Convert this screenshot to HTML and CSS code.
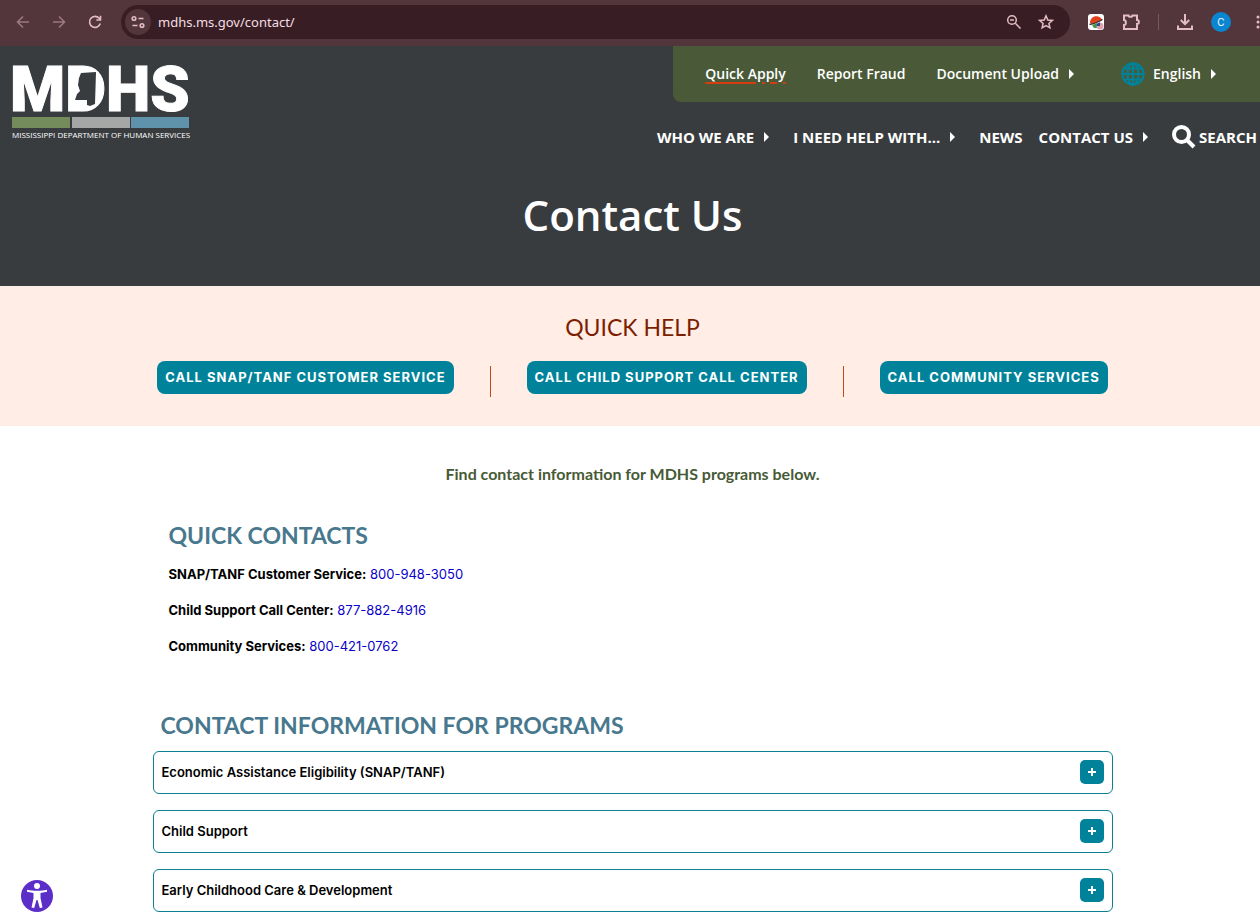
FILE: index.html
```
<!DOCTYPE html>
<html lang="en">
<head>
    <meta charset="UTF-8">
    <meta name="viewport" content="width=device-width, initial-scale=1">
    <title>Contact Us - MDHS</title>
    <link rel="stylesheet" href="styles.css">
</head>
<body>
    <div class="browser">
        <div class="browser-nav">
            <button class="tool dim" aria-label="Back">
                <svg width="16" height="16" viewBox="0 0 16 16"><path d="M14 8H3M8 2.500L2.500 8L8 13.500"/></svg>
            </button>
            <button class="tool dim" aria-label="Forward">
                <svg width="16" height="16" viewBox="0 0 16 16"><path d="M2 8H13M8 2.500L13.500 8L8 13.500"/></svg>
            </button>
            <button class="tool" aria-label="Reload">
                <svg width="16" height="16" viewBox="0 0 16 16"><path d="M13.300 9.500A5.500 5.500 0 1 1 12.200 4.300L13.500 5.700M13.500 1.800V6H9.300"/></svg>
            </button>
        </div>
        <div class="address">
            <button class="site-info" aria-label="Site information">
                <svg width="14" height="14" viewBox="0 0 14 14"><circle cx="3" cy="3.500" r="1.800"/><path d="M7.500 3.500H12.500M1.500 10.500H6.500"/><circle cx="11" cy="10.500" r="1.800"/></svg>
            </button>
            <input class="url" type="text" aria-label="Address" value="mdhs.ms.gov/contact/">
            <button class="tool" aria-label="Zoom">
                <svg width="16" height="16" viewBox="0 0 16 16"><circle cx="6" cy="6" r="4.300"/><path d="M9.300 9.300L14.500 14.500M4 6H8"/></svg>
            </button>
            <button class="tool" aria-label="Bookmark this page">
                <svg width="16" height="16" viewBox="0 0 16 16"><path d="M8 1.800L9.800 6L14.300 6.400L10.900 9.400L11.900 13.800L8 11.500L4.100 13.800L5.100 9.400L1.700 6.400L6.200 6Z"/></svg>
            </button>
        </div>
        <div class="browser-tools">
            <button class="tool" aria-label="Extension">
                <svg class="solid" width="16" height="16" viewBox="0 0 16 16"><rect width="16" height="16" rx="3" fill="#fff"/><path d="M2 9C2 4 6 1.500 10 2.500C13 3.300 14 5 14 6.500L4 10.500Z" fill="#e2431e"/><path d="M1.500 10.500C6 10 10 8 14.500 5.500" fill="none" stroke="#333" stroke-width="1.300"/><path d="M4 11L9 9V14H6Z" fill="#3f9a4d"/><circle cx="12" cy="12" r="3.500" fill="#dfa3b0"/><path d="M8.500 12A3.500 3.500 0 0 1 12 8.500V12Z" fill="#35478c"/></svg>
            </button>
            <button class="tool" aria-label="Extensions">
                <svg width="20" height="18" viewBox="0 0 20 18"><path d="M3 2.500H7.500C7.500 4.200 11.500 4.200 11.500 2.500H16V7C18.500 7 18.500 11 16 11V16H3V12C5.500 12 5.500 7 3 7Z"/></svg>
            </button>
            <span class="divider"></span>
            <button class="tool" aria-label="Downloads">
                <svg width="18" height="18" viewBox="0 0 18 18"><path d="M9 1V11M4.800 7L9 11.200L13.200 7M2 12.500V16H16V12.500"/></svg>
            </button>
            <button class="profile" aria-label="Profile">C</button>
            <button class="tool more" aria-label="Menu">
                <svg class="solid" width="6" height="16" viewBox="0 0 6 16"><circle cx="3" cy="3" r="1.500"/><circle cx="3" cy="8" r="1.500"/><circle cx="3" cy="13" r="1.500"/></svg>
            </button>
        </div>
    </div>

    <header class="header">
        <div class="header-top">
            <a class="logo" href="#" aria-label="Mississippi Department of Human Services">
                <svg width="188" height="98" viewBox="0 -14 188 98">
                    <text class="logo-name" x="-1" y="47">MDHS</text>
                    <path d="M65 7H76C92 7 92 42 76 42H65Z" fill="#fff"/>
                    <path class="logo-state" d="M70 9L85 8L84 40L79 42L76 41L76 36L64 36L66 30L69 27L67 21L68 14Z"/>
                    <rect x="1" y="53" width="58" height="11" fill="#748c5b"/>
                    <rect x="61" y="53" width="58" height="11" fill="#a5a6a6"/>
                    <rect x="120" y="53" width="58" height="11" fill="#5e93ab"/>
                    <text class="logo-line" x="1" y="74">MISSISSIPPI DEPARTMENT OF HUMAN SERVICES</text>
                </svg>
            </a>
            <div class="menus">
                <nav class="utility">
                    <a class="active" href="#">Quick Apply</a>
                    <a href="#">Report Fraud</a>
                    <a class="drop" href="#">Document Upload</a>
                    <a class="drop language" href="#">
                        <svg width="24" height="24" viewBox="0 0 24 24"><circle cx="12" cy="12" r="10.700"/><ellipse cx="12" cy="12" rx="5.500" ry="10.700"/><path d="M12 1V23M1 12H23M3 6.500H21M3 17.500H21"/></svg>
                        English
                    </a>
                </nav>
                <nav class="main-nav">
                    <a class="drop" href="#">WHO WE ARE</a>
                    <a class="drop" href="#">I NEED HELP WITH...</a>
                    <a href="#">NEWS</a>
                    <a class="drop" href="#">CONTACT US</a>
                    <a class="search" href="#">
                        <svg width="24" height="24" viewBox="0 0 24 24"><circle cx="9.500" cy="9.500" r="7.500"/><path d="M15 15L22 22"/></svg>
                        SEARCH
                    </a>
                </nav>
            </div>
        </div>
        <h1>Contact Us</h1>
    </header>

    <section class="quick-help">
        <h2>QUICK HELP</h2>
        <div class="calls">
            <a class="call" href="tel:800-948-3050">CALL SNAP/TANF CUSTOMER SERVICE</a>
            <span class="rule"></span>
            <a class="call" href="tel:877-882-4916">CALL CHILD SUPPORT CALL CENTER</a>
            <span class="rule"></span>
            <a class="call" href="tel:800-421-0762">CALL COMMUNITY SERVICES</a>
        </div>
    </section>

    <main class="content">
        <p class="intro">Find contact information for MDHS programs below.</p>

        <section class="contacts">
            <h2>QUICK CONTACTS</h2>
            <p><strong>SNAP/TANF Customer Service:</strong> <a href="tel:800-948-3050">800-948-3050</a></p>
            <p><strong>Child Support Call Center:</strong> <a href="tel:877-882-4916">877-882-4916</a></p>
            <p><strong>Community Services:</strong> <a href="tel:800-421-0762">800-421-0762</a></p>
        </section>

        <section class="programs">
            <h2>CONTACT INFORMATION FOR PROGRAMS</h2>
            <button class="program" aria-expanded="false">
                Economic Assistance Eligibility (SNAP/TANF)
                <span class="plus"></span>
            </button>
            <button class="program" aria-expanded="false">
                Child Support
                <span class="plus"></span>
            </button>
            <button class="program" aria-expanded="false">
                Early Childhood Care &amp; Development
                <span class="plus"></span>
            </button>
        </section>
    </main>

    <button class="accessibility" aria-label="Accessibility menu">
        <svg width="32" height="32" viewBox="0 0 32 32"><circle cx="16" cy="16" r="16" fill="#5c2ec8"/><circle cx="16" cy="6" r="3" fill="#fff"/><path d="M6 9.800C12 11.200 20 11.200 26 9.800V11.800L19.500 13V18L21.500 27.500L18.800 28L16.500 20H15.500L13.200 28L10.500 27.500L12.500 18V13L6 11.800Z" fill="#fff"/></svg>
    </button>
</body>
</html>
```
FILE: styles.css
```
* {
    box-sizing: border-box;
}

body {
    margin: 0;
    background: #fff;
    color: #000;
    font-family: "Inter", "Open Sans", sans-serif;
    font-size: 13px;
    line-height: 20px;
}

h1, h2, p {
    margin: 0;
}

a {
    text-decoration: none;
}

button {
    padding: 0;
    border: 0;
    background: none;
    font: inherit;
    cursor: pointer;
}

svg {
    display: block;
}

/* Browser toolbar */
.browser {
    display: flex;
    align-items: center;
    height: 46px;
    padding: 0 0 2px 15px;
    background: #53353c;
    overflow: hidden;
}

.browser-nav {
    display: flex;
    gap: 20px;
    margin-right: 18px;
}

.tool svg,
.site-info svg {
    fill: none;
    stroke: #e3bcc5;
    stroke-width: 2;
}

.browser-nav .tool svg,
.site-info svg {
    stroke-width: 1.6;
}

.tool .solid {
    fill: #e3bcc5;
    stroke: none;
}

.dim {
    opacity: 0.5;
}

.address {
    display: flex;
    flex: 1;
    align-items: center;
    gap: 16px;
    height: 34px;
    padding: 0 16px 0 4px;
    border-radius: 17px;
    background: #381e24;
}

.address .tool svg {
    stroke-width: 1.5;
}

.site-info {
    display: grid;
    place-items: center;
    width: 26px;
    height: 26px;
    border-radius: 50%;
    background: #53353c;
}

.url {
    flex: 1;
    min-width: 0;
    margin-left: -9px;
    padding: 0;
    border: 0;
    outline: none;
    background: none;
    color: #f3dfe3;
    font-family: "Noto Sans", sans-serif;
    font-size: 13px;
}

.browser-tools {
    display: flex;
    align-items: center;
    gap: 17px;
    margin-left: 18px;
}

.browser-tools svg {
    flex: none;
}

.divider {
    width: 1px;
    height: 16px;
    background: #7b565f;
}

.profile {
    width: 20px;
    height: 20px;
    border-radius: 50%;
    background: #0a86d1;
    color: #fff;
    font-size: 10px;
}

.more {
    margin: 0 -1px 0 7px;
}

/* Site header */
.header {
    height: 240px;
    background: #393c3f;
    color: #fff;
    font-family: "Open Sans", sans-serif;
}

.header-top {
    display: flex;
    justify-content: space-between;
    align-items: flex-start;
}

.logo {
    padding: 4px 0 0 11px;
}

.logo-name {
    fill: #fff;
    stroke: #fff;
    stroke-width: 1;
    font-family: "Roboto", sans-serif;
    font-size: 63px;
    font-weight: 900;
}

.logo-state {
    fill: #393c3f;
}

.logo-line {
    fill: #fff;
    font-family: "Open Sans", sans-serif;
    font-size: 8px;
}

.menus {
    display: flex;
    flex-direction: column;
    align-items: flex-end;
}

.menus a {
    display: flex;
    align-items: center;
    color: #fff;
}

/* Small triangle after items that open a submenu */
.drop::after {
    content: "";
    margin-left: 10px;
    border-left: 5px solid #fff;
    border-top: 5px solid transparent;
    border-bottom: 5px solid transparent;
}

.utility {
    display: flex;
    align-items: center;
    gap: 31px;
    height: 56px;
    padding: 0 44px 1px 32px;
    border-bottom-left-radius: 8px;
    background: #4a5a38;
    font-size: 14px;
    font-weight: 600;
}

.utility .active {
    text-decoration: underline 2px #d43d0f;
    text-underline-offset: 3px;
}

.language {
    gap: 8px;
    margin-left: 16px;
}

.language::after {
    margin-left: 2px;
}

.language svg {
    fill: none;
    stroke: #00829a;
    stroke-width: 2;
}

.main-nav {
    display: flex;
    align-items: center;
    gap: 16px;
    margin-top: 23px;
    padding-right: 3px;
    font-size: 15px;
    font-weight: 700;
}

.main-nav .drop {
    margin-right: 8px;
}

.search {
    gap: 3px;
}

.search svg {
    fill: none;
    stroke: #fff;
    stroke-width: 4;
}

h1 {
    margin-top: 36px;
    padding-left: 5px;
    font-size: 42px;
    font-weight: 600;
    line-height: 60px;
    text-align: center;
}

/* Quick help */
.quick-help {
    height: 140px;
    padding: 25px 0 0 5px;
    background: #ffede6;
    text-align: center;
}

h2 {
    color: #48788d;
    font-family: "Lato", sans-serif;
    font-size: 23px;
    font-weight: 700;
    line-height: 32px;
}

.quick-help h2 {
    color: #7d1e00;
    font-weight: 400;
}

.calls {
    display: flex;
    justify-content: center;
    gap: 36px;
    margin-top: 18px;
}

.call {
    height: 33px;
    padding: 0 8px;
    border-radius: 8px;
    background: #00839a;
    color: #fff;
    font-weight: 700;
    letter-spacing: 1px;
    line-height: 32px;
}

.rule {
    width: 1px;
    height: 31px;
    margin-top: 5px;
    background: #c04a1c;
}

/* Page content */
.content {
    max-width: 965px;
    margin: 0 auto;
    padding: 36px 0 0 5px;
}

.intro {
    color: #475a36;
    font-family: "Lato", sans-serif;
    font-size: 16px;
    font-weight: 700;
    line-height: 24px;
    text-align: center;
}

.contacts {
    padding: 33px 16px 0;
}

.contacts h2 {
    margin-bottom: 13px;
}

.contacts p {
    margin-bottom: 16px;
}

.contacts a {
    color: #0a00c8;
}

.programs {
    display: flex;
    flex-direction: column;
    gap: 16px;
    margin-top: 53px;
}

.programs h2 {
    padding-left: 8px;
    margin-bottom: -6px;
}

.program {
    display: flex;
    justify-content: space-between;
    align-items: center;
    height: 43px;
    padding: 0 8px 2px;
    border: 1px solid #0b808f;
    border-radius: 6px;
    color: #000;
    font-weight: 600;
}

.plus {
    display: grid;
    place-items: center;
    width: 24px;
    height: 24px;
    border-radius: 5px;
    background: #00839a;
}

.plus::before,
.plus::after {
    content: "";
    grid-area: 1 / 1;
    width: 8px;
    height: 2px;
    background: #fff;
}

.plus::after {
    width: 2px;
    height: 8px;
}

.accessibility {
    position: fixed;
    left: 21px;
    bottom: 2px;
}
```
